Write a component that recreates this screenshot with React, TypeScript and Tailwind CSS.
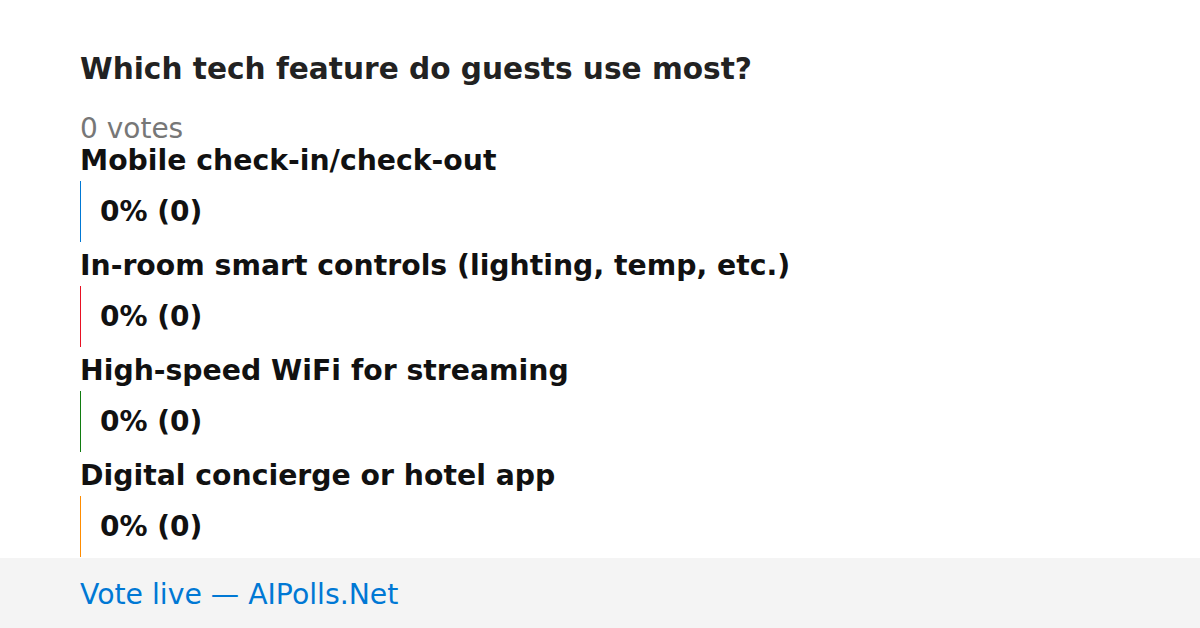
const options = [
  { label: "Mobile check-in/check-out", color: "border-[#0078d4]" },
  { label: "In-room smart controls (lighting, temp, etc.)", color: "border-[#e81123]" },
  { label: "High-speed WiFi for streaming", color: "border-[#107c10]" },
  { label: "Digital concierge or hotel app", color: "border-[#ff8c00]" },
];

export default function App() {
  return (
    <div
      className="w-[1200px] h-[628px] bg-white flex flex-col overflow-hidden"
      style={{ fontFamily: '"DejaVu Sans", sans-serif' }}
    >
      <div className="flex-1 px-[80px] pt-[49px]">
        <h1 className="text-[29.6px] leading-[40px] font-bold text-[#222]">
          Which tech feature do guests use most?
        </h1>
        <div className="mt-[25px] text-[28px] leading-[30px] text-[#777]">0 votes</div>
        <div className="flex flex-col gap-[7px]">
          {options.map((o) => (
            <div key={o.label}>
              <div className="text-[28.3px] leading-[34px] font-bold text-[#111]">{o.label}</div>
              <div className={`mt-[3px] h-[61px] border-l ${o.color} pl-[19px] flex items-center`}>
                <span className="text-[28px] font-bold text-[#111]">0% (0)</span>
              </div>
            </div>
          ))}
        </div>
      </div>
      <div className="h-[70px] bg-[#f4f4f4] px-[80px] pt-[4px] flex items-center">
        <span className="text-[28.3px] text-[#0078d4]">Vote live — AIPolls.Net</span>
      </div>
    </div>
  );
}
